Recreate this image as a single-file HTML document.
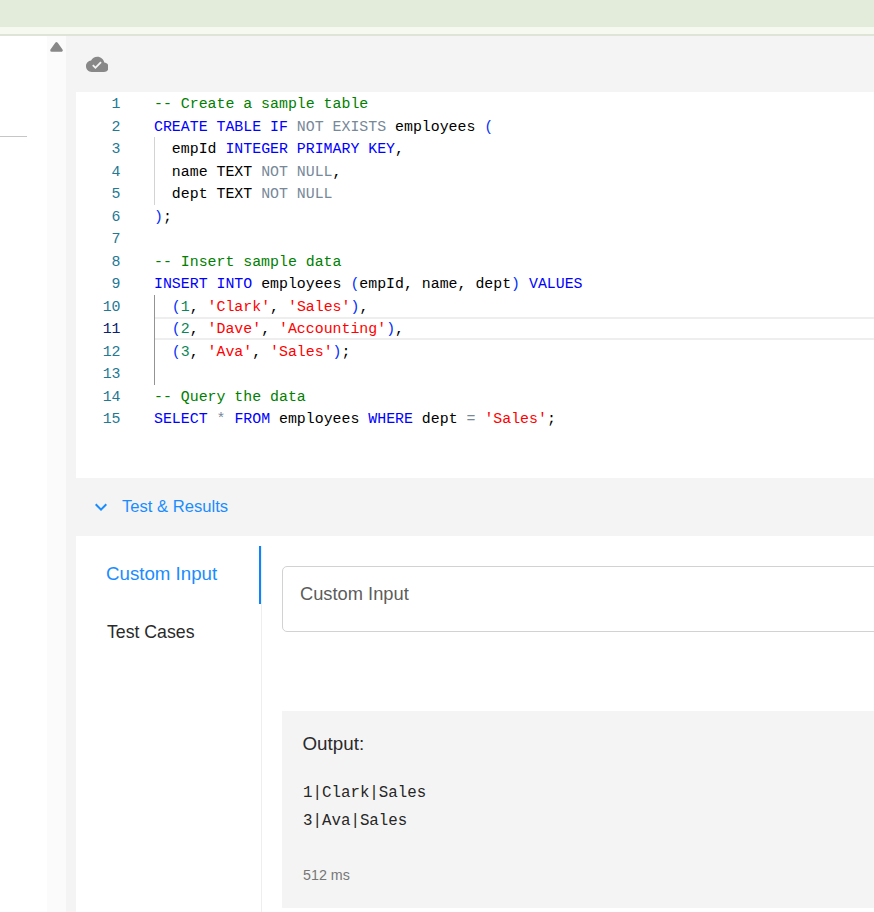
<!DOCTYPE html>
<html><head><meta charset="utf-8">
<style>
html,body{margin:0;padding:0;width:874px;height:912px;overflow:hidden;background:#fff;position:relative;font-family:"Liberation Sans",sans-serif;}
.abs{position:absolute;}
#topbar{left:0;top:0;width:874px;height:27px;background:#e3ebdb;}
#topstrip{left:0;top:27px;width:874px;height:7px;background:#f6f9f0;}
#topline{left:0;top:34px;width:874px;height:2px;background:#dfe5d6;}
#leftline{left:0;top:136px;width:27px;height:1px;background:#c6c6c6;}
#scrollcol{left:47px;top:36px;width:19px;height:876px;background:#fbfbfb;}
#panel{left:66px;top:36px;width:808px;height:876px;background:#f4f4f4;}
#editor{left:76px;top:92px;width:798px;height:386px;background:#fff;}
.code{font-family:"Liberation Mono",monospace;font-size:14.88px;line-height:24px;white-space:pre;}
.ln{left:76px;width:44.5px;text-align:right;color:#237893;}
.ln.act{color:#0b216f;}
.tx{left:154px;color:#000;}
.c{color:#008000}.k{color:#0000ff}.o{color:#778899}.p{color:#0431fa}.n{color:#098658}.s{color:#ff0000}
#curline{left:155px;top:317px;width:719px;height:19px;border-top:2px solid #eee;border-bottom:2px solid #eee;}
.guide{left:154px;width:1px;background:#a0a0a0;}
#results{left:76px;top:536px;width:798px;height:376px;background:#fff;}
</style></head><body>
<div class="abs" id="topbar"></div>
<div class="abs" id="topstrip"></div>
<div class="abs" id="topline"></div>
<div class="abs" id="leftline"></div>
<div class="abs" id="scrollcol"></div>
<svg class="abs" style="left:47px;top:36px" width="19" height="20" viewBox="0 0 19 20"><path d="M9.5 7.7 L14.3 14.3 L4.7 14.3 Z" fill="#888" stroke="#888" stroke-width="3" stroke-linejoin="round"/></svg>
<div class="abs" id="panel"></div>
<svg class="abs" style="left:85.8px;top:52.8px" width="22.7" height="22.7" viewBox="0 0 24 24"><path fill="#888" d="M19.35 10.04C18.67 6.59 15.64 4 12 4 9.11 4 6.6 5.64 5.35 8.04 2.34 8.36 0 10.91 0 14c0 3.31 2.69 6 6 6h13c2.76 0 5-2.24 5-5 0-2.64-2.05-4.78-4.65-4.96zM10 17l-3.5-3.5 1.41-1.41L10 14.17 15.18 9l1.41 1.41L10 17z"/></svg>
<div class="abs" id="editor"></div>
<div class="abs" id="curline"></div>
<div class="abs guide" style="top:137px;height:68px;background:#d3d3d3"></div>
<div class="abs guide" style="top:295px;height:90px;background:#939393"></div>
<div class="abs code ln" style="top:92px">1</div>
<div class="abs code tx" style="top:92px"><span class="c">-- Create a sample table</span></div>
<div class="abs code ln" style="top:115px">2</div>
<div class="abs code tx" style="top:115px"><span class="k">CREATE TABLE IF</span> <span class="o">NOT EXISTS</span> employees <span class="p">(</span></div>
<div class="abs code ln" style="top:137px">3</div>
<div class="abs code tx" style="top:137px">  empId <span class="k">INTEGER PRIMARY KEY</span>,</div>
<div class="abs code ln" style="top:160px">4</div>
<div class="abs code tx" style="top:160px">  name TEXT <span class="o">NOT NULL</span>,</div>
<div class="abs code ln" style="top:182px">5</div>
<div class="abs code tx" style="top:182px">  dept TEXT <span class="o">NOT NULL</span></div>
<div class="abs code ln" style="top:205px">6</div>
<div class="abs code tx" style="top:205px"><span class="p">)</span>;</div>
<div class="abs code ln" style="top:227px">7</div>
<div class="abs code ln" style="top:250px">8</div>
<div class="abs code tx" style="top:250px"><span class="c">-- Insert sample data</span></div>
<div class="abs code ln" style="top:272px">9</div>
<div class="abs code tx" style="top:272px"><span class="k">INSERT INTO</span> employees <span class="p">(</span>empId, name, dept<span class="p">)</span> <span class="k">VALUES</span></div>
<div class="abs code ln" style="top:295px">10</div>
<div class="abs code tx" style="top:295px">  <span class="p">(</span><span class="n">1</span>, <span class="s">'Clark'</span>, <span class="s">'Sales'</span><span class="p">)</span>,</div>
<div class="abs code ln act" style="top:317px">11</div>
<div class="abs code tx" style="top:317px">  <span class="p">(</span><span class="n">2</span>, <span class="s">'Dave'</span>, <span class="s">'Accounting'</span><span class="p">)</span>,</div>
<div class="abs code ln" style="top:340px">12</div>
<div class="abs code tx" style="top:340px">  <span class="p">(</span><span class="n">3</span>, <span class="s">'Ava'</span>, <span class="s">'Sales'</span><span class="p">)</span>;</div>
<div class="abs code ln" style="top:362px">13</div>
<div class="abs code ln" style="top:385px">14</div>
<div class="abs code tx" style="top:385px"><span class="c">-- Query the data</span></div>
<div class="abs code ln" style="top:407px">15</div>
<div class="abs code tx" style="top:407px"><span class="k">SELECT</span> <span class="o">*</span> <span class="k">FROM</span> employees <span class="k">WHERE</span> dept <span class="o">=</span> <span class="s">'Sales'</span>;</div>

<svg class="abs" style="left:89px;top:495px" width="24" height="24" viewBox="0 0 24 24"><path fill="#1a8cff" d="M16.59 8.59L12 13.17 7.41 8.59 6 10l6 6 6-6z"/></svg>
<div class="abs" style="left:122px;top:497px;font-size:16.6px;line-height:20px;color:#1a8cff;">Test &amp; Results</div>

<div class="abs" id="results"></div>
<div class="abs" style="left:259px;top:546px;width:2px;height:58px;background:#0a84ff"></div>
<div class="abs" style="left:261px;top:546px;width:1px;height:366px;background:#eee"></div>
<div class="abs" style="left:106px;top:563px;font-size:18.7px;line-height:22px;color:#1a8cff;">Custom Input</div>
<div class="abs" style="left:107px;top:621px;font-size:17.7px;line-height:22px;color:#2a2a2a;">Test Cases</div>

<div class="abs" style="left:282px;top:566px;width:600px;height:64px;border:1px solid #d2d2d2;border-radius:5px;background:#fff"></div>
<div class="abs" style="left:300px;top:583px;font-size:18.3px;line-height:22px;color:#5c5c5c;">Custom Input</div>

<div class="abs" style="left:282px;top:711px;width:592px;height:197px;background:#f4f4f4"></div>
<div class="abs" style="left:302.5px;top:733px;font-size:18.8px;line-height:22px;color:#2a2a2a;">Output:</div>
<div class="abs code" style="left:303px;top:779px;font-size:15.8px;line-height:28px;color:#262626;">1|Clark|Sales
3|Ava|Sales</div>
<div class="abs" style="left:303px;top:866px;font-size:14.3px;line-height:18px;color:#777;">512 ms</div>
</body></html>
